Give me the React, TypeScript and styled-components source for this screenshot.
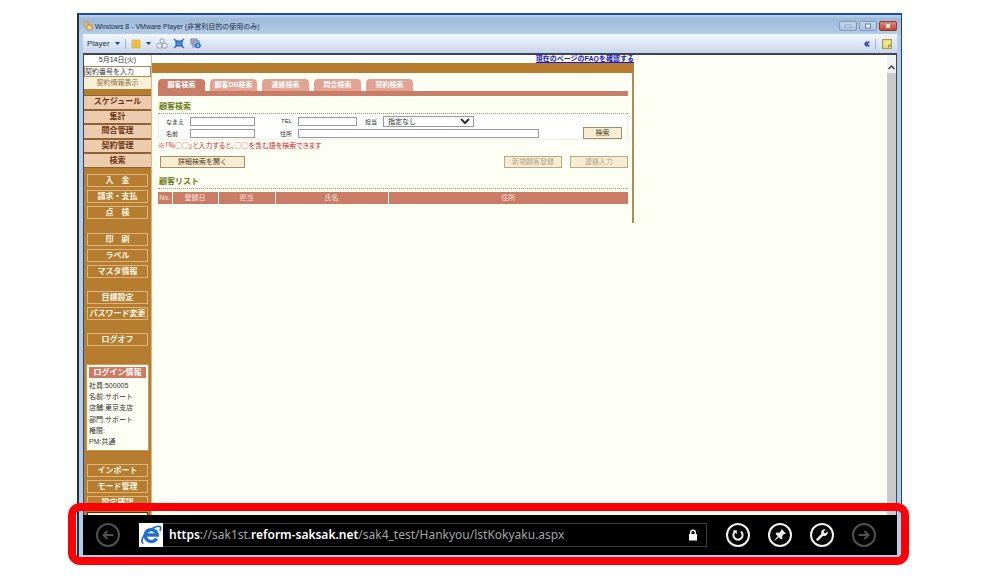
import React from "react";
import styled, { createGlobalStyle, css } from "styled-components";

const Global = createGlobalStyle`
  *, *::before, *::after { box-sizing: border-box; }
  body { margin: 0; background: #fff; font-family: "Liberation Sans", "Noto Sans CJK JP", sans-serif; font-size: 8px; color: #333; }
  button, input, select { font: inherit; margin: 0; padding: 0; border-radius: 0; }
  button { cursor: pointer; white-space: nowrap; }
  h2, p, dl, dd, dt { margin: 0; }
`;

const Page = styled.main`
  padding: 13px 98px 20px 77px;
`;

const Player = styled.section`
  border-style: solid;
  border-width: 2px 1px 0 2px;
  border-color: #1f4da6 #27415f #1f4da6 #25303f;
  background: #b4cdea;
  padding: 0 4px 3px;
`;

const TitleBar = styled.header`
  display: flex;
  align-items: center;
  height: 19px;
  margin: 0 -4px;
  padding: 3px 4px 0 4px;
  gap: 2px;
  background: linear-gradient(#c3d6ec, #9dbad9 20%, #b4cbe9);
`;

const Title = styled.span`
  flex: 1;
  color: #1c2c44;
  font-size: 7px;
  white-space: nowrap;
`;

const Caption = styled.button<{ $close?: boolean }>`
  display: grid;
  place-items: center;
  width: 18px;
  height: 10px;
  border: 1px solid ${(p) => (p.$close ? "#8d3a30" : "#7f9bbb")};
  border-radius: 2px;
  background: ${(p) =>
    p.$close ? "linear-gradient(#dd8a78, #c4432b)" : "linear-gradient(#c5d8ec, #a9c2dd)"};
`;

const ToolBar = styled.div`
  display: flex;
  align-items: center;
  height: 19px;
  padding: 0 4px;
  gap: 5px;
  background: linear-gradient(#f2f7fe, #dde8f6 50%, #c9d5ea);
`;

const Tool = styled.button`
  display: flex;
  align-items: center;
  gap: 5px;
  border: 0;
  background: none;
  color: #1c2c44;
`;

const Divider = styled.i`
  width: 1px;
  height: 10px;
  background: #9fb4d0;
`;

const Spacer = styled.span`
  flex: 1;
`;

const Screen = styled.div`
  border: solid #3d4656;
  border-width: 2px 1px 0;
  background: #fdfff4;
`;

const Browser = styled.div`
  display: flex;
  align-items: stretch;
`;

const Side = styled.nav`
  display: flex;
  flex-direction: column;
  flex: none;
  width: 68px;
  background: #b67d30;
  border-right: 1px solid #d9b98a;
`;

const DateLine = styled.div`
  height: 11px;
  line-height: 10px;
  font-size: 7px;
  text-align: center;
  background: #fff;
`;

const CodeInput = styled.input`
  width: 100%;
  height: 11px;
  border: 1px solid #b08a50;
  background: #fff;
  color: #444;
  font-size: 7px;
  &::placeholder { color: #444; opacity: 1; }
`;

const InfoButton = styled.button`
  height: 12px;
  border: 0;
  background: #f9efd6;
  color: #8b7340;
  font-size: 7px;
  line-height: 12px;
`;

const MainMenu = styled.div`
  display: grid;
  grid-auto-rows: 1fr;
  height: 73px;
  margin-top: 6px;
`;

const MenuButton = styled.button`
  border: solid #8f6236;
  border-width: 1px 0;
  background: #ecccac;
  color: #6b3515;
  font-weight: bold;
  line-height: 12px;
`;

const SubMenu = styled.div<{ $gap: number }>`
  display: flex;
  flex-direction: column;
  gap: 3px;
  padding: 0 3px;
  margin-top: ${(p) => p.$gap}px;
`;

const SubButton = styled.button`
  height: 13px;
  border: 1px solid #dcb67c;
  background: #b67d30;
  color: #fff8e8;
  font-weight: bold;
  line-height: 11px;
  white-space: pre;
`;

const CutOff = styled.div`
  height: 3px;
  border: 1px solid #4a3416;
  border-bottom: 0;
  background: #f9efd6;
`;

const Login = styled.div`
  margin: 18px 2px 0;
  padding: 2px;
  border: 1px solid #c99a58;
  background: #fdfff4;
`;

const LoginTitle = styled.h2`
  height: 11px;
  background: #d07a66;
  color: #fff;
  font-size: 8px;
  line-height: 11px;
  text-align: center;
`;

const LoginList = styled.dl`
  display: grid;
  grid-auto-rows: 1fr;
  height: 70px;
  padding: 2px 0 1px;
  font-size: 7px;
  line-height: 11px;
  div { display: flex; white-space: nowrap; }
`;

const Work = styled.div`
  flex: none;
  width: 482px;
`;

const LinkLine = styled.div`
  height: 8px;
  background: #fff;
  text-align: right;
  font-size: 7px;
  line-height: 8px;
  a { color: #1a1ac8; font-weight: bold; }
`;

const Panel = styled.div`
  border-top: 10px solid #b67d30;
  border-right: 2px solid #b08b5c;
  height: 160px;
  padding: 6px 4px 0 6px;
`;

const Tabs = styled.div`
  display: flex;
  gap: 5px;
  border-bottom: 5px solid #c97c66;
`;

const Tab = styled.button<{ $on?: boolean }>`
  width: 47px;
  height: 12px;
  border: 0;
  border-radius: 4px 4px 0 0;
  background: ${(p) => (p.$on ? "#c97c66" : "#e2a393")};
  color: #fff;
  font-size: 7px;
  font-weight: bold;
  line-height: 12px;
`;

const Heading = styled.h2<{ $top: number }>`
  margin-top: ${(p) => p.$top}px;
  height: 13px;
  padding-left: 1px;
  border-bottom: 1px dotted #8f9f62;
  color: #6c7b14;
  font-size: 8px;
  line-height: 11px;
`;

const Form = styled.form`
  display: grid;
  grid-template-columns: 24px 65px 43px 59px 26px 91px 1fr 39px;
  grid-auto-rows: 10px;
  row-gap: 2px;
  align-items: center;
  padding: 2px 5px 1px 7px;
  border: 1px solid #ecefe4;
  border-top: 0;
  background: #fff;
  font-size: 6px;
`;

const Label = styled.label<{ $right?: boolean }>`
  ${(p) => p.$right && css`
    text-align: right;
    padding-right: 6px;
  `}
  white-space: nowrap;
`;

const Field = styled.input<{ $wide?: boolean }>`
  width: 100%;
  height: 9px;
  border: 1px solid #9a9a9a;
  background: #fff;
  ${(p) => p.$wide && css`
    grid-column: 4 / 8;
    width: 241px;
  `}
`;

const Choice = styled.select`
  width: 100%;
  height: 11px;
  border: 1px solid #9a9a9a;
  background: #fff;
  color: #333;
  font-size: 7px;
`;

const Plain = styled.button<{ $w?: number }>`
  width: ${(p) => p.$w ?? 58}px;
  height: 12px;
  border: 1px solid #a58f63;
  background: #f8ecd2;
  color: #4d3a18;
  font-size: 7px;
  line-height: 10px;
  &:disabled { color: #b3a88f; border-color: #b9ab88; }
`;

const Hint = styled.p`
  color: #d8262e;
  font-family: "Noto Sans CJK JP", sans-serif;
  font-feature-settings: "palt";
  font-size: 7px;
  line-height: 10px;
  white-space: nowrap;
`;

const Actions = styled.div`
  display: flex;
  gap: 8px;
  margin-top: 6px;
  padding-left: 2px;
`;

const List = styled.table`
  width: 100%;
  margin-top: 3px;
  border-collapse: collapse;
  table-layout: fixed;
  th {
    height: 12px;
    padding: 0;
    background: #c97c66;
    color: #fbe9df;
    font-size: 7px;
    font-weight: normal;
    line-height: 12px;
  }
  th + th { border-left: 1px solid #fdfff4; }
`;

const ScrollBar = styled.div`
  width: 9px;
  margin-left: auto;
  padding: 8px 0 0;
  background: linear-gradient(#f3f1f0 18px, #cbcaca 18px);
`;

const AppBar = styled.footer`
  position: relative;
  display: flex;
  align-items: center;
  height: 40px;
  margin: 0 -1px;
  padding: 0 21px 0 13px;
  background: #000;
`;

const Round = styled.button<{ $dim?: boolean }>`
  display: grid;
  place-items: center;
  width: 24px;
  height: 24px;
  border: 2px solid currentColor;
  border-radius: 50%;
  background: none;
  color: ${(p) => (p.$dim ? "#505050" : "#f0f0f0")};
`;

const Address = styled.div`
  display: flex;
  align-items: center;
  flex: 1;
  height: 24px;
  margin: 0 19px 0 19px;
  padding-right: 8px;
  border: 1px solid #3c3c3c;
  border-left: 0;
  color: #a5a5a5;
  font-family: "Noto Sans", "Open Sans", sans-serif;
  font-size: 12px;
  line-height: 22px;
  white-space: nowrap;
  svg { flex: none; }
`;

const Url = styled.a`
  flex: 1;
  margin-left: 6px;
  color: inherit;
  text-decoration: none;
  b { color: #fff; font-weight: 600; }
`;

const Buttons = styled.div`
  display: flex;
  gap: 18px;
`;

const Highlight = styled.i`
  position: absolute;
  inset: -12px -12px -10px -15px;
  border: 8px solid #fb0007;
  border-radius: 12px;
  pointer-events: none;
`;

const Caret = () => (
  <svg width="5" height="3" viewBox="0 0 5 3"><path d="M0 0h5L2.500 3z" fill="#1d3f8c" /></svg>
);

const Arrow = ({ flip }: { flip?: boolean }) => (
  <svg width="14" height="14" viewBox="0 0 14 14" fill="none" stroke="currentColor" strokeWidth="2">
    <path d={flip ? "M1.500 7h10M7.500 3l4 4-4 4" : "M12.500 7h-10M6.500 3l-4 4 4 4"} />
  </svg>
);

const mainMenu = ["スケジュール", "集計", "問合管理", "契約管理", "検索"];
const subMenus = [
  { gap: 6, items: ["入　金", "請求・支払", "点　検"] },
  { gap: 14, items: ["印　刷", "ラベル", "マスタ情報"] },
  { gap: 13, items: ["目標設定", "パスワード変更"] },
  { gap: 13, items: ["ログオフ"] },
];
const login = [
  ["社員", "500005"],
  ["名前", "サポート"],
  ["店舗", "東京支店"],
  ["部門", "サポート"],
  ["権限", ""],
  ["PM", "共通"],
];
const tabs = ["顧客検索", "顧客DB検索", "連絡検索", "問合検索", "契約検索"];

export default function App() {
  return (
    <Page>
      <Global />
      <Player>
        <TitleBar>
          <svg width="10" height="10" viewBox="0 0 10 10" fill="none">
            <rect x="1" y="1" width="5" height="5" rx="1" stroke="#d9a53c" strokeWidth="1.500" />
            <rect x="4" y="4" width="5" height="5" rx="1" fill="#f4d58a" stroke="#b98a35" />
          </svg>
          <Title>Windows 8 - VMware Player (非営利目的の使用のみ)</Title>
          <Caption aria-label="最小化">
            <svg width="8" height="4" viewBox="0 0 8 4"><rect x="1" y="1" width="6" height="2" fill="#e8f0f8" stroke="#6c86a5" strokeWidth=".6" /></svg>
          </Caption>
          <Caption aria-label="最大化">
            <svg width="8" height="6" viewBox="0 0 8 6"><rect x="1.500" y="1" width="5" height="4" fill="#e8f0f8" stroke="#6c86a5" /></svg>
          </Caption>
          <Caption $close aria-label="閉じる">
            <svg width="8" height="6" viewBox="0 0 8 6"><path d="M2 1l4 4M6 1L2 5" stroke="#fff" strokeWidth="1.500" /></svg>
          </Caption>
        </TitleBar>
        <ToolBar>
          <Tool>Player <Caret /></Tool>
          <Divider />
          <Tool aria-label="一時停止">
            <svg width="10" height="10" viewBox="0 0 10 10"><path d="M1 1h3.500v8H1zM5.500 1H9v8H5.500z" fill="#f0c63c" stroke="#d3a526" strokeWidth=".6" /></svg>
            <Caret />
          </Tool>
          <Tool aria-label="Ctrl+Alt+Del">
            <svg width="12" height="11" viewBox="0 0 12 11" fill="#e9edf3" stroke="#8f9aaa" strokeWidth=".9">
              <rect x="4" y="1" width="4" height="4" rx="1" /><rect x="1" y="5.500" width="4.800" height="4.500" rx="1" /><rect x="6.200" y="5.500" width="4.800" height="4.500" rx="1" />
            </svg>
          </Tool>
          <Tool aria-label="全画面">
            <svg width="12" height="11" viewBox="0 0 12 11"><path d="M1 1l10 9M11 1L1 10" stroke="#2f6fc4" strokeWidth="1.500" /><rect x="3" y="3" width="6" height="5" fill="#4b8ada" stroke="#1f5cad" /></svg>
          </Tool>
          <Tool aria-label="ユニティ">
            <svg width="11" height="11" viewBox="0 0 11 11"><rect x="1" y="1" width="6" height="5" fill="#b9c8da" stroke="#70839c" /><rect x="3" y="3" width="6" height="6" fill="#9db4d0" stroke="#70839c" /><circle cx="8" cy="7.500" r="2.800" fill="#2a6fd0" /><path d="M8 6v3" stroke="#fff" /></svg>
          </Tool>
          <Spacer />
          <Tool aria-label="デバイス">
            <svg width="6" height="6" viewBox="0 0 6 6"><path d="M3 .5L.8 3 3 5.500M5.300 .5L3 3l2.300 2.500" stroke="#2b35c4" strokeWidth="1.300" fill="none" /></svg>
          </Tool>
          <Divider />
          <Tool aria-label="メモ">
            <svg width="12" height="10" viewBox="0 0 12 10"><rect x="1.500" y=".5" width="9" height="9" fill="#ecd76c" stroke="#a99a4c" /><path d="M4 3h5M4 5h3" stroke="#fffbe0" /><path d="M7 9V6h4z" fill="#8f9c7a" /></svg>
          </Tool>
        </ToolBar>
        <Screen>
          <Browser>
            <Side>
              <DateLine>5月14日(火)</DateLine>
              <CodeInput aria-label="契約番号" placeholder="契約番号を入力" />
              <InfoButton>契約情報表示</InfoButton>
              <MainMenu>
                {mainMenu.map((m) => <MenuButton key={m}>{m}</MenuButton>)}
              </MainMenu>
              {subMenus.map((g) => (
                <SubMenu key={g.items[0]} $gap={g.gap}>
                  {g.items.map((m) => <SubButton key={m}>{m}</SubButton>)}
                </SubMenu>
              ))}
              <Login>
                <LoginTitle>ログイン情報</LoginTitle>
                <LoginList>
                  {login.map(([k, v]) => <div key={k}><dt>{k}:</dt><dd>{v}</dd></div>)}
                </LoginList>
              </Login>
              <SubMenu $gap={13}>
                <SubButton>インポート</SubButton>
                <SubButton>モード管理</SubButton>
                <SubButton>設定確認</SubButton>
                <CutOff />
              </SubMenu>
            </Side>
            <Work>
              <LinkLine><a href="#faq">現在のページのFAQを確認する</a></LinkLine>
              <Panel>
                <Tabs>
                  {tabs.map((t, i) => <Tab key={t} $on={i === 0}>{t}</Tab>)}
                </Tabs>
                <Heading $top={5}>顧客検索</Heading>
                <Form>
                  <Label htmlFor="kana">なまえ</Label>
                  <Field id="kana" />
                  <Label $right htmlFor="tel">TEL</Label>
                  <Field id="tel" />
                  <Label $right htmlFor="staff">担当</Label>
                  <Choice id="staff"><option>指定なし</option></Choice>
                  <span /><span />
                  <Label htmlFor="name">名前</Label>
                  <Field id="name" />
                  <Label $right htmlFor="addr">住所</Label>
                  <Field $wide id="addr" />
                  <Plain type="button" $w={39}>検索</Plain>
                </Form>
                <Hint>※「%○○」と入力すると、○○を含む語を検索できます</Hint>
                <Actions>
                  <Plain $w={85}>詳細検索を開く</Plain>
                  <Spacer />
                  <Plain disabled>新規顧客登録</Plain>
                  <Plain disabled>連絡入力</Plain>
                </Actions>
                <Heading $top={8}>顧客リスト</Heading>
                <List>
                  <colgroup><col width="14" /><col width="46" /><col width="57" /><col width="113" /><col /></colgroup>
                  <thead><tr><th>No.</th><th>登録日</th><th>担当</th><th>氏名</th><th>住所</th></tr></thead>
                </List>
              </Panel>
            </Work>
            <ScrollBar>
              <svg width="9" height="8" viewBox="0 0 9 8"><path d="M1.500 6L4.500 3l3 3" fill="none" stroke="#444" strokeWidth="1.500" /></svg>
            </ScrollBar>
          </Browser>
          <AppBar>
            <Round $dim aria-label="戻る"><Arrow /></Round>
            <Address>
              <svg width="24" height="24" viewBox="0 0 24 24">
                <rect width="24" height="24" fill="#fff" />
                <path d="M17.500 15.500a6 6 0 1 1 .7-3.500H7" fill="none" stroke="#1f6fd6" strokeWidth="3.400" />
                <path d="M4.500 20.500C.5 19.500 4 11 12 6.200c4-2.500 8.500-4 9.500-2 .5 1.200 0 2.500-.7 3.800" fill="none" stroke="#1f6fd6" strokeWidth="1.700" />
              </svg>
              <Url href="#top"><b>https</b>://sak1st.<b>reform-saksak.net</b>/sak4_test/Hankyou/lstKokyaku.aspx</Url>
              <svg width="10" height="12" viewBox="0 0 10 12"><rect x="1" y="5" width="8" height="6.500" fill="#fff" /><path d="M2.700 5V3.500a2.300 2.300 0 0 1 4.600 0V5" fill="none" stroke="#fff" strokeWidth="1.400" /></svg>
            </Address>
            <Buttons>
              <Round aria-label="更新">
                <svg width="14" height="14" viewBox="0 0 14 14" fill="none" stroke="currentColor" strokeWidth="2"><path d="M10 3.600A4.600 4.600 0 1 1 4 3.600" /><path d="M1.800 2.200h4v4z" fill="currentColor" stroke="none" /></svg>
              </Round>
              <Round aria-label="ピン留め">
                <svg width="14" height="14" viewBox="0 0 14 14" fill="currentColor"><path d="M8.500 1l4.500 4.500-1.200.5-.6-.2-2 2.200.2 2.500-1.200 1L5.800 9.200 2 12.500l-.5-.5L4.800 8.200 2.500 5.800l1-1.200 2.500.2 2.200-2L8 2.200z" /></svg>
              </Round>
              <Round aria-label="ツール">
                <svg width="14" height="14" viewBox="0 0 14 14" fill="currentColor"><path d="M12.600 3.300a3.500 3.500 0 0 1-4.500 4.400l-4.600 4.700a1.300 1.300 0 0 1-1.900-1.900l4.700-4.600A3.500 3.500 0 0 1 10.700 1.400L8.700 3.500l.3 1.500 1.500.3z" /></svg>
              </Round>
              <Round $dim aria-label="進む"><Arrow flip /></Round>
            </Buttons>
            <Highlight />
          </AppBar>
        </Screen>
      </Player>
    </Page>
  );
}
